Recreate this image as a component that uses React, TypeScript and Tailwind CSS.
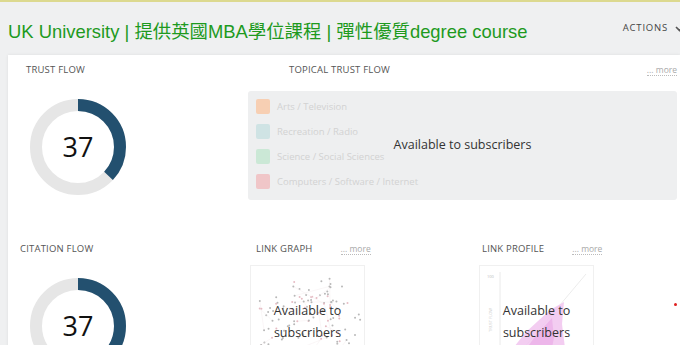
import React from 'react';

const label = "font-['Open_Sans',sans-serif] text-[9.5px] uppercase text-[#555] tracking-[0.2px]";
const more = "font-['Open_Sans',sans-serif] text-[8.5px] text-[#aaa] border-b border-dotted border-[#bbb] leading-[11px]";

const Donut: React.FC<{ value: number }> = ({ value }) => {
  const r = 42;
  const c = 2 * Math.PI * r;
  return (
    <div className="relative w-[96px] h-[96px]">
      <svg width="96" height="96" viewBox="0 0 96 96">
        <circle cx="48" cy="48" r={r} fill="none" stroke="#e6e6e6" strokeWidth="12" />
        <circle
          cx="48"
          cy="48"
          r={r}
          fill="none"
          stroke="#23506f"
          strokeWidth="12"
          strokeDasharray={`${(c * value) / 100} ${c}`}
          transform="rotate(-90 48 48)"
        />
      </svg>
      <div className="absolute inset-0 flex items-center justify-center font-['Open_Sans',sans-serif] text-[27px] text-[#111]">
        {value}
      </div>
    </div>
  );
};

// deterministic scatter for the link graph
const makeDots = () => {
  let s = 17;
  const rnd = () => {
    s = (s * 9301 + 49297) % 233280;
    return s / 233280;
  };
  const centers = [
    [62, 24], [30, 48], [88, 52], [55, 72], [18, 88], [96, 92], [70, 38],
  ];
  const dots: { x: number; y: number; pink: boolean }[] = [];
  for (let i = 0; i < 140; i++) {
    const ctr = centers[i % centers.length];
    dots.push({
      x: ctr[0] + (rnd() - 0.5) * 44,
      y: ctr[1] + (rnd() - 0.5) * 36,
      pink: rnd() < 0.25,
    });
  }
  return dots;
};
const dots = makeDots();

const Unavailable: React.FC = () => (
  <div className="absolute inset-0 pt-[4px] flex items-center justify-center text-center font-['Open_Sans',sans-serif] text-[12.5px] leading-[22px] text-[#333]">
    Available to
    <br />
    subscribers
  </div>
);

const topics = [
  { name: 'Arts / Television', color: 'bg-[#f7cfb3]' },
  { name: 'Recreation / Radio', color: 'bg-[#cfe3e4]' },
  { name: 'Science / Social Sciences', color: 'bg-[#cbe8d6]' },
  { name: 'Computers / Software / Internet', color: 'bg-[#f0c6c8]' },
];

export default function App() {
  return (
    <div className="w-[680px] h-[345px] overflow-hidden bg-[#eff0f1] border-t-2 border-[#dcd98f]">
      <header className="h-[53px] flex items-center justify-between pl-2 pt-[6px]">
        <h1 className="font-['Liberation_Sans','Noto_Sans_CJK_TC',sans-serif] text-[18.4px] text-[#1e9a1e] whitespace-nowrap">
          UK University | 提供英國MBA學位課程 | 彈性優質degree course
        </h1>
        <div className="flex items-center gap-[7px] mb-[6px] mr-[-4px] font-['Open_Sans',sans-serif] text-[9.5px] tracking-[0.8px] text-[#444]">
          ACTIONS
          <svg width="9" height="6" viewBox="0 0 9 6">
            <path d="M1 1l3.5 3.5L8 1" fill="none" stroke="#555" strokeWidth="1.6" />
          </svg>
        </div>
      </header>

      <main className="ml-2 bg-white shadow-[0_0_3px_rgba(0,0,0,0.08)] h-[300px]">
        <section className="flex h-[180px]">
          <div className="w-[240px] pl-[18px] pt-[8px]">
            <div className={label}>Trust Flow</div>
            <div className="mt-[22px] ml-[4px]">
              <Donut value={37} />
            </div>
          </div>
          <div className="flex-1 pr-[3px] pt-[8px]">
            <div className="flex items-center justify-between">
              <div className={`${label} ml-[41px]`}>Topical Trust Flow</div>
              <span className={more}>... more</span>
            </div>
            <div className="relative mt-[14px] h-[109px] rounded-[3px] bg-[#eeeff0] px-[8px] pt-[8px] flex flex-col gap-[10px]">
              {topics.map((t) => (
                <div key={t.name} className="flex items-center gap-[7px]">
                  <span className={`w-[14px] h-[15px] rounded-[2px] ${t.color}`} />
                  <span className="font-['Open_Sans',sans-serif] text-[9.5px] text-[#d2d2d2]">{t.name}</span>
                </div>
              ))}
              <div className="absolute inset-0 flex items-center justify-center font-['Open_Sans',sans-serif] text-[12.5px] text-[#333]">
                Available to subscribers
              </div>
            </div>
          </div>
        </section>

        <section className="flex">
          <div className="w-[242px] pl-[12px] pt-[7px]">
            <div className={label}>Citation Flow</div>
            <div className="mt-[22px] ml-[10px]">
              <Donut value={37} />
            </div>
          </div>

          <div className="w-[229px] pt-[7px]">
            <div className="flex items-center gap-[28px] pl-[6px]">
              <div className={label}>Link Graph</div>
              <span className={more}>... more</span>
            </div>
            <div className="relative mt-[9px] w-[115px] h-[110px] border border-[#f0f0f0] overflow-hidden">
              <svg width="115" height="110" viewBox="0 0 115 110">
                {dots.map((d, i) => (
                  <g key={i}>
                    {i % 6 === 0 && (
                      <line x1={d.x} y1={d.y} x2={dots[(i + 7) % dots.length].x} y2={dots[(i + 7) % dots.length].y} stroke="#f3e8ea" strokeWidth="0.4" />
                    )}
                    <circle cx={d.x} cy={d.y} r="1" fill={d.pink ? '#e6bcc4' : '#b8b8b8'} />
                  </g>
                ))}
              </svg>
              <Unavailable />
            </div>
          </div>

          <div className="w-[185px] pt-[7px]">
            <div className="flex items-center gap-[28px] pl-[3px]">
              <div className={label}>Link Profile</div>
              <span className={more}>... more</span>
            </div>
            <div className="relative mt-[9px] w-[115px] h-[110px] border border-[#f0f0f0] overflow-hidden">
              <svg width="115" height="110" viewBox="0 0 115 110">
                <text x="7" y="12" fontSize="4" fill="#bbb" fontFamily="Open Sans">100</text>
                <text x="0" y="0" fontSize="4" fill="#ccc" fontFamily="Open Sans" transform="translate(12 66) rotate(-90)">TRUST FLOW</text>
                <line x1="20" y1="6" x2="20" y2="110" stroke="#e4e4e4" strokeWidth="0.8" />
                <line x1="22" y1="108" x2="106" y2="8" stroke="#ececec" strokeWidth="1" />
                <polygon points="22,96 46,66 70,44 84,36 82,58 86,90 80,110 26,110" fill="#f1c4ef" opacity="0.85" />
                <polygon points="34,100 54,72 72,52 74,72 66,110 40,110" fill="#e9a6e6" opacity="0.6" />
              </svg>
              <Unavailable />
            </div>
          </div>

          <div className="flex-1 pt-[68px] pl-[10px]">
            <span className="block w-[3px] h-[3px] rounded-full bg-[#e02020]" />
          </div>
        </section>
      </main>
    </div>
  );
}
